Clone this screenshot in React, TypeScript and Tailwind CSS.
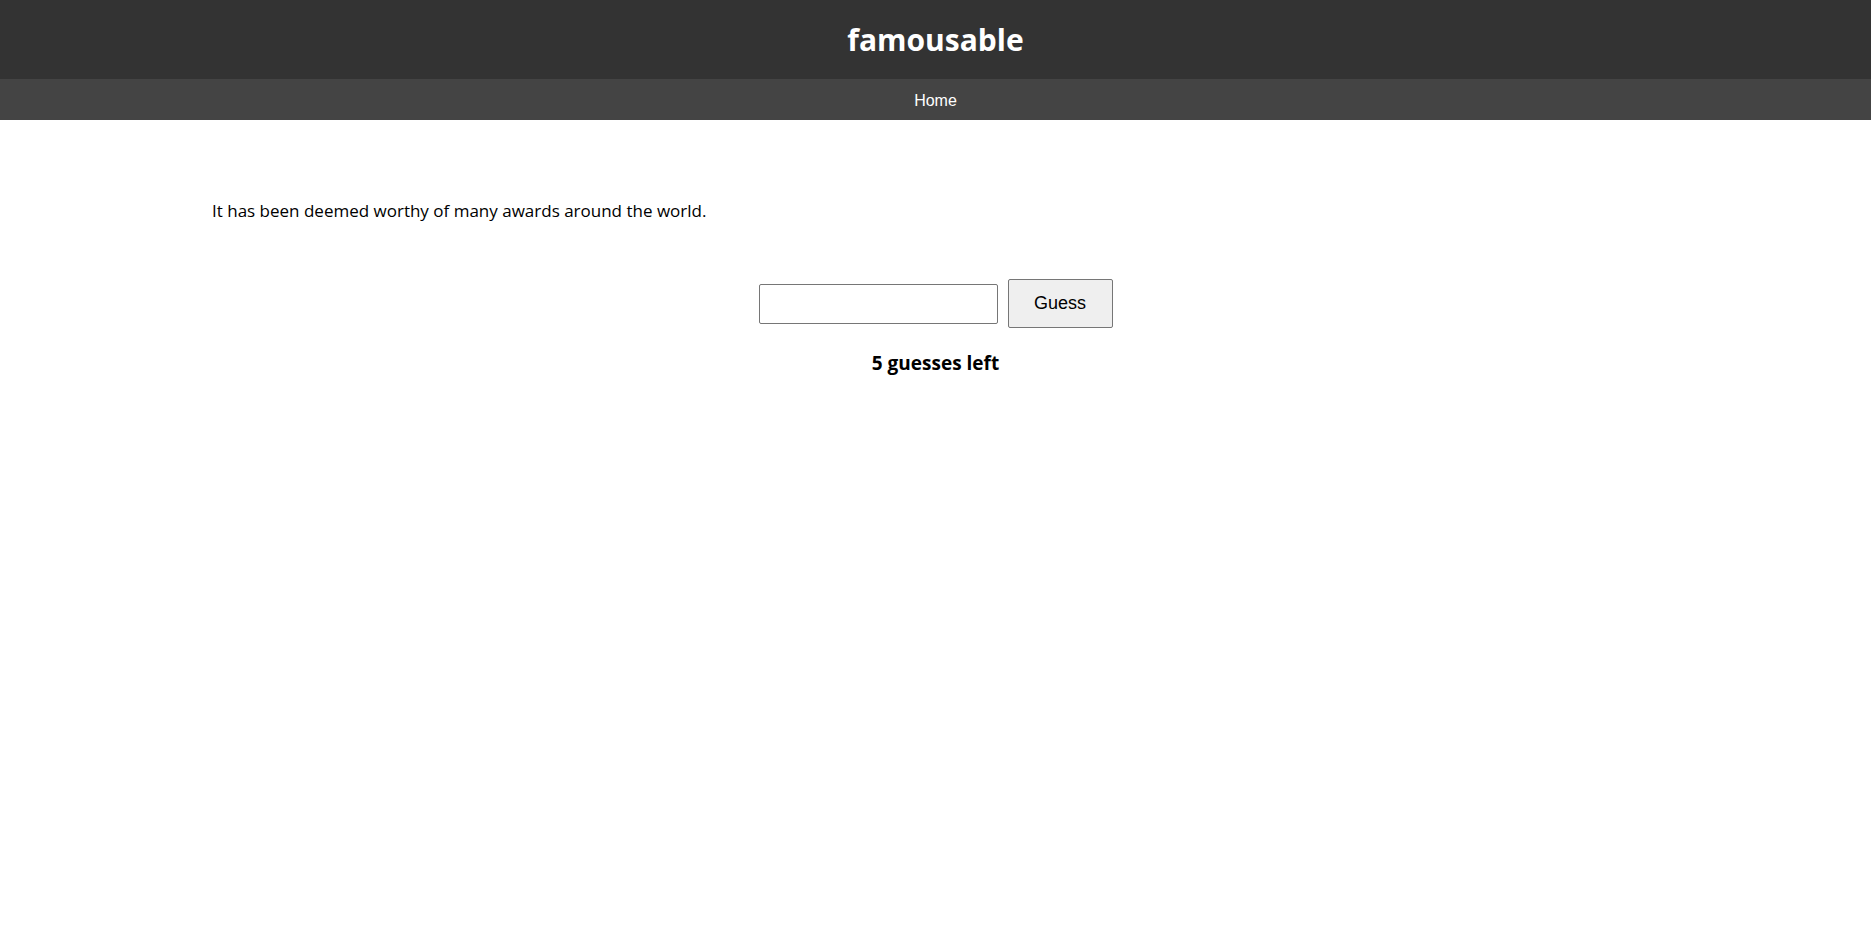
export default function App() {
  return (
    <div className="min-h-screen bg-white font-['Open_Sans',sans-serif] text-black">
      <header className="flex h-[79px] items-center justify-center bg-[#333333]">
        <h1 className="text-[30px] font-bold text-white">famousable</h1>
      </header>
      <nav className="flex h-[41px] items-center justify-center bg-[#444444] pt-[3px]">
        <a href="#" className="font-['Liberation_Sans',sans-serif] text-[16px] text-white">
          Home
        </a>
      </nav>
      <main className="px-[212px] pt-[79px]">
        <p className="text-[17px] leading-6">It has been deemed worthy of many awards around the world.</p>
        <div className="mt-[56px] flex flex-col items-center">
          <div className="flex items-center gap-[10px]">
            <input
              type="text"
              className="h-10 w-[239px] rounded-[2px] border border-[#767676] px-2 outline-none"
            />
            <button className="h-[49px] w-[105px] rounded-[2px] border border-[#767676] bg-[#efefef] font-['Liberation_Sans',sans-serif] text-[18px]">
              Guess
            </button>
          </div>
          <p className="mt-[21px] text-[19px] font-bold">5 guesses left</p>
        </div>
      </main>
    </div>
  );
}
